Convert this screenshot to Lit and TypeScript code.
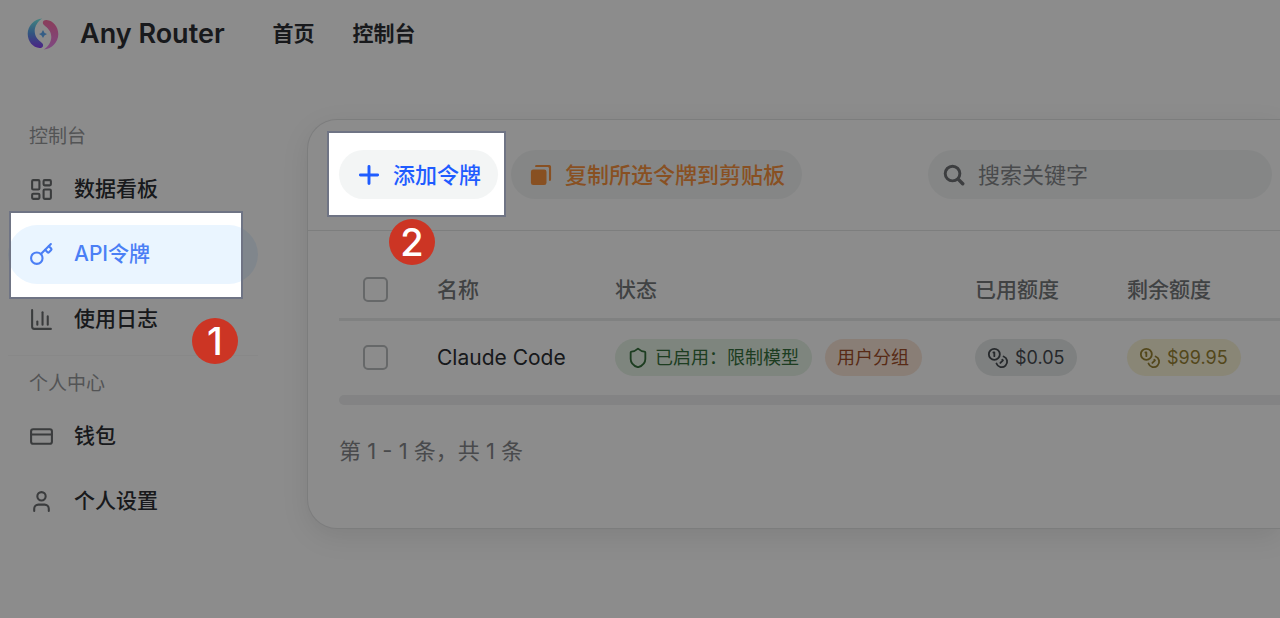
import { LitElement, html, css, svg } from "lit";
import { customElement, state } from "lit/decorators.js";

const icons: Record<string, unknown> = {
  board: svg`<rect x="3" y="3" width="7" height="9" rx="1"/><rect x="14" y="3" width="7" height="5" rx="1"/><rect x="14" y="12" width="7" height="9" rx="1"/><rect x="3" y="16" width="7" height="5" rx="1"/>`,
  key: svg`<path d="m15.5 7.5 2.3 2.3a1 1 0 0 0 1.4 0l2.1-2.1a1 1 0 0 0 0-1.4L19 4"/><path d="m21 2-9.6 9.6"/><circle cx="7.5" cy="15.5" r="5.5"/>`,
  chart: svg`<path d="M3 3v16a2 2 0 0 0 2 2h16"/><path d="M18 17V9"/><path d="M13 17V5"/><path d="M8 17v-3"/>`,
  card: svg`<rect x="2" y="5" width="20" height="14" rx="2"/><path d="M2 10h20"/>`,
  user: svg`<path d="M19 21v-2a4 4 0 0 0-4-4H9a4 4 0 0 0-4 4v2"/><circle cx="12" cy="7" r="4"/>`,
  shield: svg`<path d="M20 13c0 5-3.5 7.5-7.66 8.95a1 1 0 0 1-.67-.01C7.5 20.5 4 18 4 13V6a1 1 0 0 1 1-1c2 0 4.5-1.2 6.24-2.72a1.17 1.17 0 0 1 1.52 0C14.51 3.81 17 5 19 5a1 1 0 0 1 1 1z"/>`,
  coins: svg`<circle cx="8" cy="8" r="6"/><path d="M18.09 10.37A6 6 0 1 1 10.34 18"/><path d="M7 6h1v4"/><path d="m16.71 13.88.7.71-2.82 2.82"/>`,
  plus: svg`<path stroke-width="3.2" d="M12 2.6v18.8M2.6 12h18.8"/>`,
  copy: svg`<path fill="currentColor" stroke="none" d="M7.500 1H21a2 2 0 0 1 2 2v13.500a2 2 0 0 1-2 2V5a2 2 0 0 0-2-2H5.500a2 2 0 0 1 2-2z"/><path stroke-width="2" stroke-linecap="butt" d="M6 2.300h13.500a2.200 2.200 0 0 1 2.200 2.200V18"/><rect x="1" y="6" width="17" height="17" rx="2.500" fill="currentColor" stroke="none"/>`,
  search: svg`<circle cx="10.400" cy="10.400" r="8" stroke-width="3.2"/><path stroke-width="3.8" d="m16.500 16.500 5 5"/>`,
};

const icon = (name: string) => html`<svg class="icon" viewBox="0 0 24 24" aria-hidden="true">${icons[name]}</svg>`;

@customElement("app-root")
export class AppRoot extends LitElement {
  @state() private current = "API令牌";

  static styles = css`
    :host {
      display: block;
      position: relative;
      min-height: 100vh;
      overflow: hidden;
      background: #fff;
      color: #2c2f33;
      font: 400 21px/30px Inter, "Noto Sans CJK SC", sans-serif;
    }
    * { box-sizing: border-box; }
    a { color: inherit; text-decoration: none; }
    button, input { font: inherit; color: inherit; border: 0; margin: 0; }
    .icon {
      width: 25px; height: 25px; flex: none;
      fill: none; stroke: currentColor; stroke-width: 2;
      stroke-linecap: round; stroke-linejoin: round;
    }
    header { display: flex; align-items: center; height: 67px; padding: 0 27px; }
    .brand { display: flex; align-items: center; gap: 21px; font-size: 27px; font-weight: 600; }
    .brand svg { width: 32px; height: 32px; }
    .top { display: flex; gap: 38px; margin-left: 48px; font-weight: 600; }
    .body { display: flex; align-items: flex-start; gap: 49px; padding-top: 52px; }
    aside { width: 258px; flex: none; padding-left: 8px; }
    .group { display: flex; flex-direction: column; gap: 6px; }
    .group + .group { margin-top: 6px; border-top: 1px solid #f8f8f8; padding-top: 10px; }
    h2 { margin: 0; padding-left: 21px; font-size: 19px; line-height: 35px; font-weight: 400; color: #97999c; }
    .link {
      display: flex; align-items: center; gap: 20px; height: 59px; padding: 0 21px;
      border-radius: 30px; font-weight: 500;
    }
    .link span { padding-bottom: 2px; }
    .link .icon { color: #6b6d70; }
    .link.on { background: #eaf5ff; color: #4b7ff5; }
    .link.on .icon { color: inherit; }
    .card {
      flex: 1; min-width: 0; border: 1px solid #e2e3e4; border-right: 0;
      border-radius: 30px 0 0 30px; background: #fff; padding-bottom: 62px;
      box-shadow: 0 8px 28px rgba(0, 0, 0, 0.09);
    }
    .tools {
      display: flex; align-items: center; gap: 13px;
      padding: 30px 8px 31px 31px; border-bottom: 1px solid #e4e5e6;
    }
    .btn {
      display: flex; align-items: center; gap: 13px; height: 49px; padding: 0 17px 0 19px;
      border-radius: 25px; background: #f3f5f5; font-size: 22px; font-weight: 500; white-space: nowrap;
    }
    .tools .icon { width: 22px; height: 22px; }
    .add { color: #1f5cff; }
    .copy { color: #f8933f; }
    .search {
      display: flex; align-items: center; gap: 13px; flex: none; width: 344px; height: 49px;
      margin-left: auto; padding: 0 15px; border-radius: 25px; background: #f3f5f5; color: #6f7275;
    }
    .search input { flex: 1; min-width: 0; padding: 0; background: none; outline: none; font-size: 22px; }
    .search input::placeholder { color: #85888b; opacity: 1; }
    .content { padding: 31px 0 0 31px; }
    table { width: 100%; border-collapse: separate; border-spacing: 0; table-layout: fixed; }
    th, td { padding: 0 0 0 24px; text-align: left; white-space: nowrap; font-weight: 400; }
    th { height: 59px; border-bottom: 3px solid #eaebec; color: #75787b; font-weight: 500; }
    td { height: 74px; }
    .pick { width: 74px; }
    .name { width: 178px; }
    .status { width: 360px; }
    .used { width: 152px; }
    input[type="checkbox"] {
      appearance: none; display: block; width: 25px; height: 25px; margin-bottom: 2px;
      border: 2px solid #bbbdbf; border-radius: 5px; background: #fff;
    }
    input[type="checkbox"]:checked { background: #1f5cff; border-color: #1f5cff; }
    .tags { display: flex; gap: 13px; padding-bottom: 2px; }
    .tag {
      display: inline-flex; align-items: center; gap: 6px; height: 37px; padding: 1px 13px 0 12px;
      border-radius: 19px; font-size: 18px; line-height: 26px;
    }
    .tag .icon { width: 22px; height: 22px; }
    .green { background: #e5f2e5; color: #36703c; }
    .orange { background: #fae5d8; color: #a04e28; }
    .grey { background: #e6eaea; color: #464b50; }
    .yellow { background: #faf4d8; color: #978232; }
    .bar { height: 10px; border-radius: 5px 0 0 5px; background: #eeeff0; }
    .info { margin: 31px 0 0; font-size: 22px; color: #85878a; }
    .shade { position: absolute; inset: 0; width: 100%; height: 100%; pointer-events: none; }
    .frame { fill: none; stroke: #6f7484; stroke-width: 2; }
    .step {
      position: absolute; display: grid; place-items: center; width: 46px; height: 46px;
      border-radius: 50%; background: #cc3524; color: #fff; font-size: 38px; font-weight: 500;
    }
    .one { left: 192px; top: 318px; }
    .two { left: 389px; top: 219px; }
  `;

  private item(name: string, glyph: string) {
    return html`<a class="link ${this.current === name ? "on" : ""}" href="#"
      @click=${(e: Event) => { e.preventDefault(); this.current = name; }}>${icon(glyph)}<span>${name}</span></a>`;
  }

  private logo() {
    return html`<svg viewBox="0 0 32 32" aria-hidden="true">
      <defs>
        <linearGradient id="cool" x1="0" y1="0" x2="0" y2="1">
          <stop offset="0" stop-color="#78f0ea"/><stop offset=".5" stop-color="#5a9cea"/><stop offset="1" stop-color="#8a40f4"/>
        </linearGradient>
        <linearGradient id="warm" x1="0" y1="1" x2="0" y2="0">
          <stop offset="0" stop-color="#fb70a4"/><stop offset="1" stop-color="#e884f0"/>
        </linearGradient>
      </defs>
      <path fill="url(#cool)" d="M15.300.4C7 1 .7 8 .7 15.700.7 23.500 6 29.500 12.500 30c3.500.3 4.700-3 2.500-5-3.500-3-7.300-6-7.300-12C7.700 8 11 3 15.300.4z"/>
      <path fill="url(#warm)" transform="rotate(180 16 16)" d="M15.300.4C7 1 .7 8 .7 15.700.7 23.500 6 29.500 12.500 30c3.500.3 4.700-3 2.500-5-3.500-3-7.300-6-7.300-12C7.700 8 11 3 15.300.4z"/>
      <path fill="#62acf4" d="M16 12q.8 3.200 4 4-3.200.8-4 4-.8-3.200-4-4 3.200-.8 4-4z"/>
    </svg>`;
  }

  render() {
    return html`
      <header>
        <a class="brand" href="#">${this.logo()}<span>Any Router</span></a>
        <nav class="top"><a href="#">首页</a><a href="#">控制台</a></nav>
      </header>
      <div class="body">
        <aside>
          <nav class="group"><h2>控制台</h2>${this.item("数据看板", "board")}${this.item("API令牌", "key")}${this.item("使用日志", "chart")}</nav>
          <nav class="group"><h2>个人中心</h2>${this.item("钱包", "card")}${this.item("个人设置", "user")}</nav>
        </aside>
        <main class="card">
          <div class="tools">
            <button class="btn add">${icon("plus")}添加令牌</button>
            <button class="btn copy">${icon("copy")}复制所选令牌到剪贴板</button>
            <label class="search">${icon("search")}<input type="text" aria-label="搜索关键字" placeholder="搜索关键字"></label>
          </div>
          <div class="content">
            <table>
              <thead><tr>
                <th class="pick"><input type="checkbox" aria-label="全选"></th>
                <th class="name">名称</th><th class="status">状态</th><th class="used">已用额度</th><th>剩余额度</th>
              </tr></thead>
              <tbody><tr>
                <td><input type="checkbox" aria-label="Claude Code"></td>
                <td>Claude Code</td>
                <td><div class="tags"><span class="tag green">${icon("shield")}已启用：限制模型</span><span class="tag orange">用户分组</span></div></td>
                <td><div class="tags"><span class="tag grey">${icon("coins")}$0.05</span></div></td>
                <td><div class="tags"><span class="tag yellow">${icon("coins")}$99.95</span></div></td>
              </tr></tbody>
            </table>
            <div class="bar"></div>
            <p class="info">第 1 - 1 条，共 1 条</p>
          </div>
        </main>
      </div>
      <svg class="shade" aria-hidden="true">
        <defs><mask id="holes">
          <rect width="100%" height="100%" fill="#fff"/>
          <rect x="10" y="212" width="232" height="86" fill="#000"/>
          <rect x="328" y="132" width="177" height="84" fill="#000"/>
        </mask></defs>
        <rect width="100%" height="100%" fill="#000" fill-opacity=".45" mask="url(#holes)"/>
        <rect class="frame" x="10" y="212" width="232" height="86"/>
        <rect class="frame" x="328" y="132" width="177" height="84"/>
      </svg>
      <span class="step one">1</span>
      <span class="step two">2</span>
    `;
  }
}
